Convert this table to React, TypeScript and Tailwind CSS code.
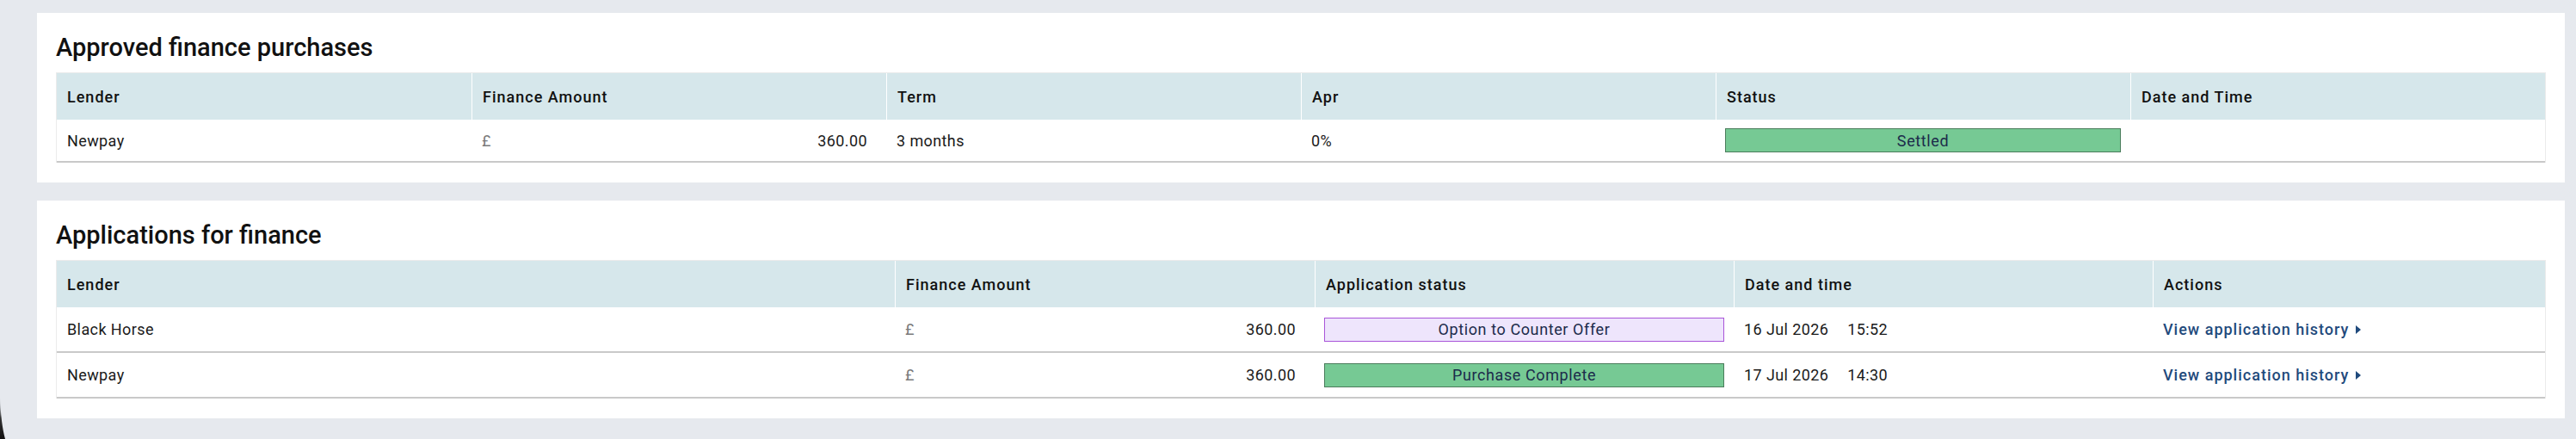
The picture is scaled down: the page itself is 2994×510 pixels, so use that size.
import React from 'react';

type Tone = 'green' | 'purple';

const toneClasses: Record<Tone, string> = {
  green: 'bg-[#76c994] border-[#4b7d5c]',
  purple: 'bg-[#eee5fc] border-[#a955d9]',
};

const approvedCols = 'grid grid-cols-6';
const applicationCols = 'grid grid-cols-[974px_488px_487px_487px_1fr]';

const approvedHeaders = ['Lender', 'Finance Amount', 'Term', 'Apr', 'Status', 'Date and Time'];
const applicationHeaders = ['Lender', 'Finance Amount', 'Application status', 'Date and time', 'Actions'];

const applications = [
  { lender: 'Black Horse', amount: '360.00', status: 'Option to Counter Offer', tone: 'purple' as Tone, date: '16 Jul 2026', time: '15:52' },
  { lender: 'Newpay', amount: '360.00', status: 'Purchase Complete', tone: 'green' as Tone, date: '17 Jul 2026', time: '14:30' },
];

const StatusBadge = ({ label, tone }: { label: string; tone: Tone }) => (
  <div className={`flex h-[28px] w-full items-center justify-center border text-[18px] tracking-[0.6px] text-[#1c2b4b] ${toneClasses[tone]}`}>
    {label}
  </div>
);

const Amount = ({ value }: { value: string }) => (
  <div className="flex items-center justify-between pl-3 pr-[22px]">
    <span className="text-[#7a7a7a]">£</span>
    <span>{value}</span>
  </div>
);

const HeaderRow = ({ cols, labels }: { cols: string; labels: string[] }) => (
  <div className={`${cols} h-[54px] bg-[#d6e7eb] font-medium tracking-[1px] text-[#111]`}>
    {labels.map((label, i) => (
      <div key={label} className={`flex items-center px-3 ${i > 0 ? 'border-l border-white' : ''}`}>
        {label}
      </div>
    ))}
  </div>
);

const Card = ({ title, children }: { title: string; children: React.ReactNode }) => (
  <section className="bg-white px-[22px] pt-[23px] pb-[23px]">
    <h2 className="mb-[12px] text-[29px] leading-[34px] font-medium text-[#111]">{title}</h2>
    <div className="border-x border-t border-[#ebebeb] text-[18px] tracking-[0.4px] text-[#1a1a1a]">{children}</div>
  </section>
);

export default function App() {
  return (
    <div className="relative min-h-screen bg-[#e6e9ee] pt-[15px] pr-[13px] pl-[43px] font-['Roboto',_sans-serif]">
      <div className="flex flex-col gap-[21px]">
        <Card title="Approved finance purchases">
          <HeaderRow cols={approvedCols} labels={approvedHeaders} />
          <div className={`${approvedCols} h-[50px] items-center border-b-2 border-[#c9c9c9]`}>
            <div className="px-3">Newpay</div>
            <Amount value="360.00" />
            <div className="px-3">3 months</div>
            <div className="px-3">0%</div>
            <div className="px-[11px]">
              <StatusBadge label="Settled" tone="green" />
            </div>
            <div />
          </div>
        </Card>

        <Card title="Applications for finance">
          <HeaderRow cols={applicationCols} labels={applicationHeaders} />
          {applications.map((app) => (
            <div key={app.lender} className={`${applicationCols} h-[53px] items-center border-b-2 border-[#c9c9c9]`}>
              <div className="px-3">{app.lender}</div>
              <Amount value={app.amount} />
              <div className="px-[11px]">
                <StatusBadge label={app.status} tone={app.tone} />
              </div>
              <div className="flex gap-[22px] px-3">
                <span>{app.date}</span>
                <span>{app.time}</span>
              </div>
              <div className="px-3">
                <a href="#" className="inline-flex items-center gap-[8px] font-medium tracking-[1px] text-[#1f4a7c]">
                  View application history
                  <svg width="6" height="10" viewBox="0 0 6 10" className="fill-current">
                    <path d="M0 0 L6 5 L0 10 Z" />
                  </svg>
                </a>
              </div>
            </div>
          ))}
        </Card>
      </div>

      {/* dark window corner at the bottom left */}
      <svg className="absolute bottom-0 left-0" width="10" height="50" viewBox="0 0 10 50">
        <defs>
          <linearGradient id="corner" x1="0" y1="0" x2="0" y2="1">
            <stop offset="0" stopColor="#9aa0a6" stopOpacity="0" />
            <stop offset="0.5" stopColor="#333" />
            <stop offset="1" stopColor="#111" />
          </linearGradient>
        </defs>
        <path d="M0 0 Q1 32 6 50 L0 50 Z" fill="url(#corner)" />
      </svg>
    </div>
  );
}
